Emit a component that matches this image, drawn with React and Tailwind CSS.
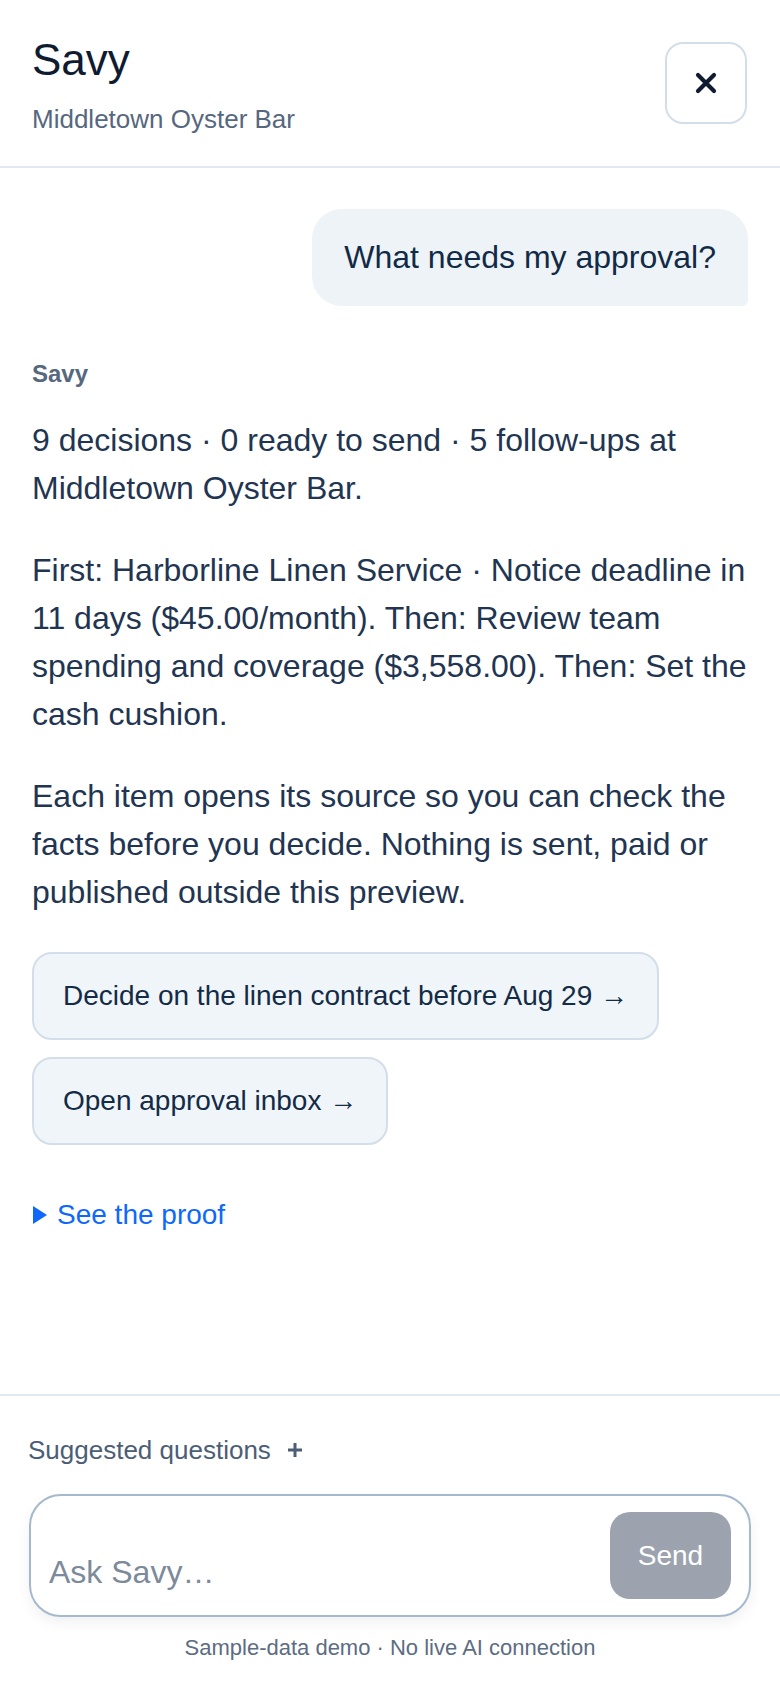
import { useState } from 'react'

const paragraphs = [
  '9 decisions · 0 ready to send · 5 follow-ups at Middletown Oyster Bar.',
  'First: Harborline Linen Service · Notice deadline in 11 days ($45.00/month). Then: Review team spending and coverage ($3,558.00). Then: Set the cash cushion.',
  'Each item opens its source so you can check the facts before you decide. Nothing is sent, paid or published outside this preview.',
]

const actions = ['Decide on the linen contract before Aug 29 →', 'Open approval inbox →']

export default function App() {
  const [draft, setDraft] = useState('')

  return (
    <div className="h-screen flex flex-col bg-white font-['Liberation_Sans',Arial,sans-serif]">
      {/* Header */}
      <div className="flex justify-between border-b-2 border-[#e2e8f0] pl-8 pr-[33px] pt-[34px] pb-[29px]">
        <div>
          <h1 className="text-[44px] leading-[52px] text-[#0f1b30]">Savy</h1>
          <p className="mt-[15px] text-[26px] leading-[36px] text-[#56677e]">Middletown Oyster Bar</p>
        </div>
        <button className="self-start mt-2 w-[82px] h-[82px] flex items-center justify-center rounded-[18px] border-2 border-[#d3deea] bg-white">
          <svg width="22" height="22" viewBox="0 0 22 22" fill="none">
            <path d="M3 3L19 19M19 3L3 19" stroke="#0f1b30" strokeWidth="4.2" strokeLinecap="round" />
          </svg>
        </button>
      </div>

      {/* Messages */}
      <div className="flex-1 overflow-y-auto px-8 pt-[41px]">
        <div className="flex justify-end">
          <div className="bg-[#eef3f8] rounded-[30px] rounded-br-md px-8 py-6 text-[32px] leading-[49px] text-[#112a46]">
            What needs my approval?
          </div>
        </div>

        <div className="mt-[52px]">
          <div className="text-[24px] leading-[32px] font-bold text-[#56677e]">Savy</div>
          <div className="mt-[26px] space-y-[34px]">
            {paragraphs.map((p, i) => (
              <p key={i} className="text-[32px] leading-[48px] text-[#1f3551]">{p}</p>
            ))}
          </div>

          <div className="mt-9 flex flex-col items-start gap-[17px]">
            {actions.map(a => (
              <button
                key={a}
                className="px-[29px] py-5 rounded-[20px] border-2 border-[#d3deea] bg-[#f0f5fa] text-[28px] leading-[44px] text-[#132b45]"
              >
                {a}
              </button>
            ))}
          </div>

          <details className="mt-[49px]">
            <summary className="list-none [&::-webkit-details-marker]:hidden flex items-center cursor-pointer text-[28px] leading-[42px] text-[#0d68fb]">
              <svg width="14" height="18" viewBox="0 0 14 18" className="ml-[1px] mr-[10px]">
                <path d="M0 0L14 9L0 18Z" fill="#0d68fb" />
              </svg>
              See the proof
            </summary>
          </details>
        </div>
      </div>

      {/* Footer */}
      <div className="border-t-2 border-[#e2e8f0] px-7 pt-9 pb-[25px]">
        <button className="flex items-center text-[26px] leading-[36px] text-[#4b5e76]">
          Suggested questions
          <svg width="16" height="16" viewBox="0 0 16 16" className="ml-4">
            <path d="M8 1V15M1 8H15" stroke="#4b5e76" strokeWidth="3" />
          </svg>
        </button>

        <div className="mt-[26px] mx-[1px] flex items-end gap-4 rounded-[32px] border-2 border-[#a5b9cd] bg-white pl-[18px] pr-[18px] py-4 shadow-[0_6px_14px_rgba(15,23,42,0.06)]">
          <textarea
            rows={1}
            value={draft}
            onChange={e => setDraft(e.target.value)}
            placeholder="Ask Savy…"
            className="flex-1 resize-none outline-none bg-transparent text-[32px] leading-[48px] py-[3px] text-[#1f3551] placeholder:text-[#7c8a9b]"
          />
          <button className="w-[121px] h-[87px] rounded-[20px] bg-[#9ca3af] text-white text-[28px] leading-[40px]">
            Send
          </button>
        </div>

        <p className="mt-4 text-center text-[22px] leading-[30px] text-[#5c6c82]">
          Sample-data demo · No live AI connection
        </p>
      </div>
    </div>
  )
}
